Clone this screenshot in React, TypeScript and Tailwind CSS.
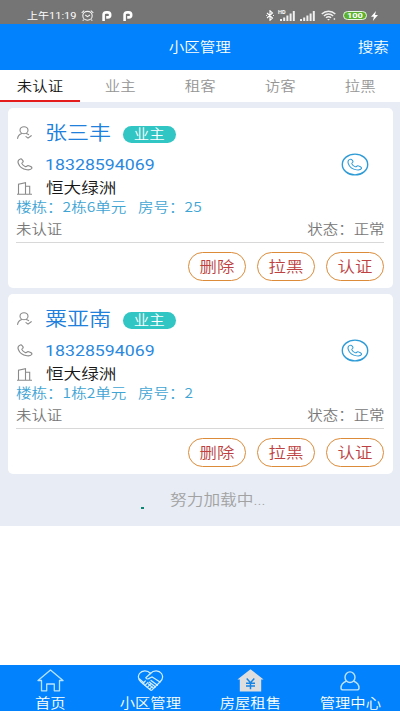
import React from 'react';
import clsx from 'clsx';

interface Resident {
  name: string;
  role: string;
  phone: string;
  community: string;
  building: string;
  room: string;
  auth: string;
  status: string;
}

const TABS = ['未认证', '业主', '租客', '访客', '拉黑'];
const ACTIONS = ['删除', '拉黑', '认证'];

const RESIDENTS: Resident[] = [
  { name: '张三丰', role: '业主', phone: '18328594069', community: '恒大绿洲', building: '2栋6单元', room: '25', auth: '未认证', status: '正常' },
  { name: '粟亚南', role: '业主', phone: '18328594069', community: '恒大绿洲', building: '1栋2单元', room: '2', auth: '未认证', status: '正常' },
];

const HANDSET = 'M2.6 1.2C1 2 .6 3.6 1.2 5.6c1 3.4 4.2 6 7.8 6.6 2 .3 3.8-.1 4.4-1.4.4-.9-.2-1.4-1-1.9l-1.8-.9c-.8-.3-1.3 0-1.7.5-.4.6-.9.6-1.5.3C6 8.2 5 7.2 4.5 5.9c-.2-.6 0-1 .6-1.4.5-.4.6-.9.3-1.6L4.5 1.5C4 .7 3.3.8 2.6 1.2z';

// Text drawn wider than the font's natural proportions
function Wide({ children, className }: { children: React.ReactNode; className?: string }) {
  return <span className={clsx('inline-block whitespace-pre scale-x-[1.16]', className)}>{children}</span>;
}

function UserIcon() {
  return (
    <svg width="15" height="14" viewBox="0 0 15 14" fill="none" stroke="#8a8a8a" strokeWidth="1.1" strokeLinecap="round">
      <ellipse cx="7" cy="4.2" rx="4" ry="3.5" />
      <path d="M.6 12.4C.9 9.9 2.5 8.2 4.8 7.5M9.2 7.5c1 .3 1.8.7 2.4 1.2M9 10.6l2 1.5 3.2-2.4" />
    </svg>
  );
}

function PhoneIcon() {
  return (
    <svg width="16" height="13" viewBox="0 0 14.5 13.5" preserveAspectRatio="none" fill="none" stroke="#8a8a8a" strokeWidth="1.1">
      <path d={HANDSET} />
    </svg>
  );
}

function BuildingIcon() {
  return (
    <svg width="15" height="13" viewBox="0 0 15 13" fill="none" stroke="#8a8a8a" strokeWidth="1.1">
      <path d="M0 12.3h15M1.5 12.3V2.2L8.5.7v11.6M8.5 4.2h4.2v8.1" />
    </svg>
  );
}

function CallIcon() {
  return (
    <svg width="28" height="23" viewBox="0 0 28 23" fill="none" stroke="#2f9bd6">
      <ellipse cx="14" cy="11.5" rx="12.7" ry="10.4" strokeWidth="1.4" />
      <path d={HANDSET} transform="translate(6 5.3) scale(1.08 .95)" strokeWidth="1" />
    </svg>
  );
}

function Signal() {
  return (
    <svg width="15" height="10" viewBox="0 0 15 10" fill="#f0f0f0">
      <path d="M0 8h2v2H0zM3.2 6.500h2V10h-2zM6.4 4.600h2V10h-2zM9.6 2.500h2V10h-2zM12.8 0h2v10h-2z" />
    </svg>
  );
}

function ParkIcon() {
  return (
    <svg width="10" height="10" viewBox="0 0 10 10" fill="none" stroke="#fff" strokeWidth="2.6">
      <path d="M1.6 10V3.500C1.600 2 2.700 1.400 4.200 1.400h1.500a2.500 2.500 0 0 1 0 5H4.200" />
    </svg>
  );
}

function StatusBar() {
  return (
    <div className="h-6 shrink-0 bg-[#757575] flex items-center pt-[7px] text-white leading-none">
      <Wide className="ml-[27px] w-[41px] text-[9.5px] font-normal origin-left">上午11:19</Wide>
      <svg className="ml-[13px]" width="13" height="11" viewBox="0 0 13 11" fill="none" stroke="#f4f4f4" strokeWidth="1.1">
        <ellipse cx="6.5" cy="5.8" rx="4.7" ry="4.4" />
        <path d="M.7 2.800 3.200.7M12.300 2.800 9.800.7M4.300 5l2.200 1.600L8.900 5M2.700 9.600l-1 1M10.300 9.600l1 1" />
      </svg>
      <div className="ml-[8px] flex gap-[11px]"><ParkIcon /><ParkIcon /></div>
      <div className="ml-auto flex items-center">
        <svg width="8" height="11" viewBox="0 0 8 11" fill="none" stroke="#fff" strokeWidth="1.1">
          <path d="M1 3l5.500 5L4 10.300V.7L6.500 3 1 8M.2 5.500h.9M7 5.500h.9" />
        </svg>
        <div className="relative ml-[5px]">
          <span className="absolute -left-[1px] -top-[1px] text-[5.5px] font-bold leading-none">HD</span>
          <svg width="16" height="10" viewBox="0 0 16 10" fill="#f0f0f0">
            <path d="M1 8h2v2H1zM4.200 6.500h2V10h-2zM7.400 4.600h2V10h-2zM10.600 2.500h2V10h-2zM13.800 0h2v10h-2z" />
          </svg>
        </div>
        <div className="ml-[5px]"><Signal /></div>
        <svg className="ml-[6px]" width="16" height="11" viewBox="0 0 17 11" fill="none" stroke="#f0f0f0" strokeWidth="1.5">
          <path d="M.8 4C4.800 0 11.200 0 15.200 4M3.100 6c2.800-2.700 7-2.700 9.800 0M5.300 8c1.600-1.500 3.800-1.500 5.400 0" />
          <path d="M6.500 9.200h3L8 10.700zM13.500 8.500h1.500v1.500h-1.500z" fill="#f0f0f0" stroke="none" />
        </svg>
        <div className="ml-[6px] h-[9px] w-[24px] rounded-full border border-[#e8f5e4] bg-[#5cb12f] flex items-center justify-center text-[8px] font-bold">
          <Wide>100</Wide>
        </div>
        <svg className="ml-[4px] mr-[22px]" width="7" height="10" viewBox="0 0 7 10" fill="#fff">
          <path d="M5 0 0 5.700h2.900L1.800 10 7 4H4z" />
        </svg>
      </div>
    </div>
  );
}

function ResidentCard({ resident }: { resident: Resident }) {
  return (
    <div className="h-[180px] shrink-0 rounded-[5px] bg-white pl-2 pr-[9px] flex flex-col">
      <div className="mt-[12px] h-7 flex items-center">
        <div className="w-[29px] pl-[1px] pb-[3px]"><UserIcon /></div>
        <Wide className="w-[78px] -mt-[1px] origin-left text-[19px] leading-7 text-[#2080dc]">{resident.name}</Wide>
        <div className="h-[17px] w-[53px] rounded-full bg-[#31c5c3] flex items-center justify-center pt-[2px] text-[13.3px] leading-none text-white">
          <Wide>{resident.role}</Wide>
        </div>
      </div>
      <div className="h-8 flex items-center">
        <div className="w-[29px] pl-[1px]"><PhoneIcon /></div>
        <Wide className="pt-[3px] origin-left font-normal text-[15.3px] leading-none text-[#2a88de]">{resident.phone}</Wide>
        <div className="ml-auto mr-[15px]"><CallIcon /></div>
      </div>
      <div className="h-[17px] flex items-center">
        <div className="w-[29px] pl-[1px]"><BuildingIcon /></div>
        <Wide className="pt-[1px] ml-[1px] origin-left text-[15.2px] leading-none text-[#151515]">{resident.community}</Wide>
      </div>
      <div className="h-5 flex items-center font-['Noto_Sans_CJK_SC',sans-serif] text-[13.4px] leading-none text-[#3fa5d5]">
        <Wide className="w-[122px] origin-left">楼栋：{resident.building}</Wide>
        <Wide className="origin-left">房号：{resident.room}</Wide>
      </div>
      <div className="mb-[2px] h-[23px] flex items-center justify-between pt-[2px] text-[13.3px] leading-none text-[#777]">
        <Wide className="origin-left">{resident.auth}</Wide>
        <Wide className="origin-right">状态：{resident.status}</Wide>
      </div>
      <div className="h-px bg-[#d8d8d8]" />
      <div className="mt-[9px] flex justify-end gap-[11px]">
        {ACTIONS.map(action => (
          <button key={action} className="h-[29px] w-[58px] rounded-full border border-[#dc8b38] flex items-center justify-center pt-[2px] text-[15px] leading-none text-[#bd4140]">
            <Wide>{action}</Wide>
          </button>
        ))}
      </div>
    </div>
  );
}

const NAV = [
  {
    label: '首页',
    icon: (
      <svg width="27" height="23" viewBox="0 0 27 23" fill="none" stroke="#b9e3ff" strokeWidth="1.3" strokeLinejoin="round">
        <path d="M1 11.500 13.500 1 26 11.500h-3.500v10.300h-5.200V15H9.700v6.800H4.500V11.500z" />
      </svg>
    ),
  },
  {
    label: '小区管理',
    icon: (
      <svg width="27" height="23" viewBox="0 0 27 23" fill="none" stroke="#d2eeff" strokeWidth="1.2" strokeLinecap="round" strokeLinejoin="round">
        <path d="M13.500 4.500C10.500.8 5 1 2.500 4.500.6 7.400 1.400 10.500 4 13l9.500 8c.7.6 1.500.3 1.800-.4M13.500 4.500c3-3.700 8.500-3.500 11 0 1.900 2.900 1.100 6-1.500 8.500l-7.700 7.600" />
        <path d="M13.500 4.500 8.800 8.800c.8 1.600 2.600 1.600 4.400 0l2-.9L23 13M2.500 10l4.500 4M5.800 14.500l2.600-2.600M8 16.400l3-3M10.300 18.400l3-3M12.600 20.200l2.600-2.600M14 11.500l6.500 4.800M12.500 13.200l6 4.800M11.500 15l5.200 4.400" />
      </svg>
    ),
  },
  {
    label: '房屋租售',
    icon: (
      <svg width="27" height="23" viewBox="0 0 27 23">
        <path d="M13.500.3 26.600 10.500h-2.400V22.500H2.800V10.500H.4z" fill="#dedede" />
        <path d="M9.700 9.500l3.800 4.200 3.800-4.200M9 14.200h9M9 17h9M13.500 13.700v6.600" fill="none" stroke="#1684e4" strokeWidth="1.5" />
      </svg>
    ),
  },
  {
    label: '管理中心',
    icon: (
      <svg width="20" height="20" viewBox="0 0 20 20" fill="none" stroke="#bfe3fb" strokeWidth="1.4">
        <ellipse cx="10" cy="6.2" rx="5" ry="5.3" />
        <path d="M6.400 10.200C3.200 11.500 1 14 1 17c0 1.300.8 1.900 2.200 1.900h13.600c1.400 0 2.200-.6 2.200-1.900 0-3-2.200-5.500-5.400-6.800" />
      </svg>
    ),
  },
];

export default function App() {
  return (
    <div className="w-[400px] h-[711px] overflow-hidden bg-white flex flex-col font-['Roboto','Noto_Sans_CJK_SC',sans-serif] font-[350]">
      <StatusBar />
      <header className="h-[46px] shrink-0 bg-[#0283fd] grid grid-cols-3 items-center pt-[2px] text-[13.4px] leading-none text-white">
        <Wide className="col-start-2 justify-self-center">小区管理</Wide>
        <Wide className="justify-self-end mr-[11px] origin-right">搜索</Wide>
      </header>
      <nav className="h-8 shrink-0 grid grid-cols-5 text-[13.3px] leading-none">
        {TABS.map((tab, i) => (
          <div
            key={tab}
            className={clsx('flex items-center justify-center border-b-2 pt-[4px]', i === 0 ? 'border-[#e51c1c] text-[#111]' : 'border-transparent text-[#959595]')}
          >
            <Wide>{tab}</Wide>
          </div>
        ))}
      </nav>
      <main className="h-[424px] shrink-0 bg-[#e7ecf5] pt-[6px] pl-2 pr-[7px] flex flex-col gap-[6px]">
        {RESIDENTS.map(r => (
          <ResidentCard key={r.name} resident={r} />
        ))}
        <div className="h-10 flex items-center">
          <div className="ml-[133px] mt-[16px] h-[2px] w-[3px] bg-[#0b8574]" />
          <Wide className="ml-[26px] pt-[2px] origin-left text-[14.4px] leading-none text-[#a2a2a2]">努力加载中...</Wide>
        </div>
      </main>
      <footer className="mt-auto h-[46px] shrink-0 bg-[#0283fd] grid grid-cols-4 text-[13.2px] leading-none text-white">
        {NAV.map(item => (
          <div key={item.label} className="flex flex-col items-center pt-[4px]">
            <div className="h-[23px] flex items-center">{item.icon}</div>
            <Wide className="mt-[5px]">{item.label}</Wide>
          </div>
        ))}
      </footer>
    </div>
  );
}
